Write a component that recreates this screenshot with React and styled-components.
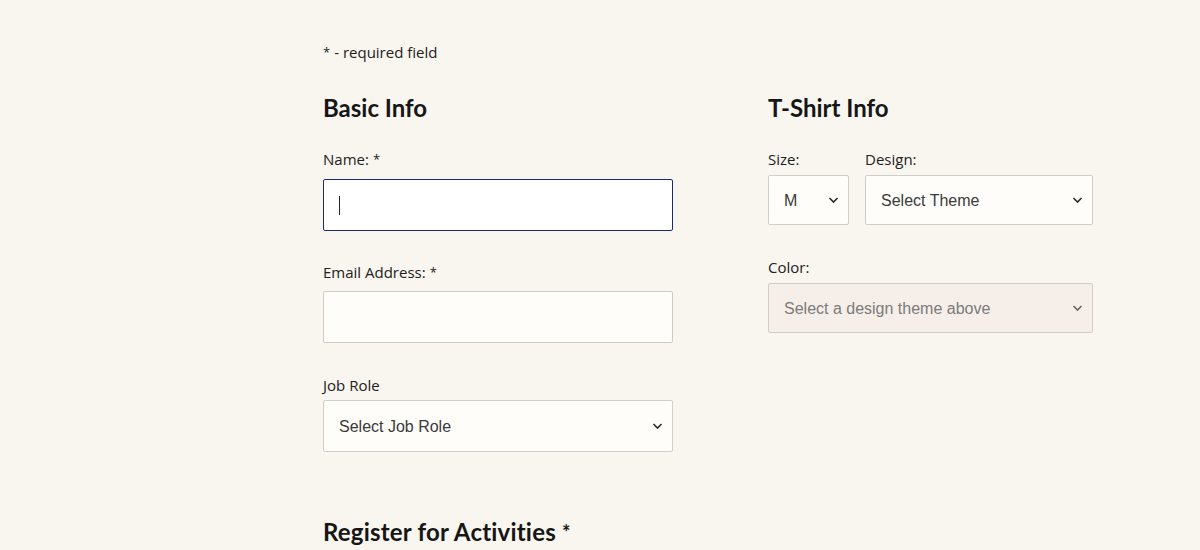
import React from "react";
import styled, { createGlobalStyle } from "styled-components";

const GlobalStyle = createGlobalStyle`
  html, body {
    margin: 0;
    padding: 0;
    background: #f9f5ef;
  }
  body {
    font-family: "Open Sans", "Noto Sans", sans-serif;
    color: #1d1d1d;
  }
`;

const Page = styled.form`
  width: 1200px;
  height: 550px;
  box-sizing: border-box;
  padding: 42px 0 0 323px;
  overflow: hidden;
`;

const Note = styled.p`
  margin: 0;
  font-size: 15px;
  line-height: 20px;
  color: #222;
`;

const Columns = styled.div`
  display: grid;
  grid-template-columns: 350px 325px;
  column-gap: 95px;
  align-items: start;
  margin-top: 31px;
`;

const Fieldset = styled.fieldset`
  border: none;
  margin: 0;
  padding: 0;
  min-width: 0;
`;

const Heading = styled.h2`
  margin: 0 0 26px;
  font-family: Lato, "Open Sans", sans-serif;
  font-size: 24px;
  line-height: 30px;
  font-weight: 700;
  letter-spacing: 0;
  color: #161616;
`;

const Field = styled.div`
  display: flex;
  flex-direction: column;
  gap: ${p => p.$gap || 10}px;
  margin-bottom: ${p => p.$after || 0}px;
`;

const Label = styled.label`
  font-size: 15px;
  line-height: 20px;
  color: #222;
`;

const Star = styled.span`
  font-size: 13px;
  vertical-align: 1px;
  margin-left: 4px;
`;

const TextInput = styled.input`
  box-sizing: border-box;
  width: 100%;
  height: 52px;
  padding: 0 16px;
  border: 1px solid ${p => (p.$focused ? "#1b2a7a" : "#cfcac4")};
  border-radius: 2px;
  background: ${p => (p.$focused ? "#ffffff" : "#fffdf9")};
  font-family: "Liberation Sans", Arial, sans-serif;
  font-size: 16px;
  outline: none;
  caret-color: #222;
`;

const SelectBox = styled.div`
  position: relative;
  width: ${p => p.$width || "100%"};
`;

const Select = styled.select`
  box-sizing: border-box;
  width: 100%;
  height: ${p => p.$height || 50}px;
  padding: 0 30px 0 15px;
  appearance: none;
  border: 1px solid #d2cdc7;
  border-radius: 2px;
  background: ${p => (p.disabled ? "#f6efe9" : "#fffdf9")};
  color: ${p => (p.disabled ? "#7b7b7b" : "#3a3a3a")};
  font-family: "Liberation Sans", Arial, sans-serif;
  font-size: 16px;
  opacity: 1;
`;

const Chevron = styled.svg`
  position: absolute;
  right: 10px;
  top: 50%;
  margin-top: -4px;
  width: 11px;
  height: 8px;
  pointer-events: none;
`;

const ShirtRow = styled.div`
  display: flex;
  gap: 16px;
  margin-bottom: 32px;
`;

const Caret = styled.span`
  position: absolute;
  left: 16px;
  top: 17px;
  width: 1px;
  height: 19px;
  background: #222;
`;

const InputWrap = styled.div`
  position: relative;
`;

const BottomHeading = styled(Heading)`
  margin-top: 65px;
  letter-spacing: 0.2px;
`;

function Dropdown({ width, height, disabled, children }) {
  return (
    <SelectBox $width={width}>
      <Select $height={height} disabled={disabled}>
        {children}
      </Select>
      <Chevron viewBox="0 0 11 8">
        <path d="M1.5 2 L5.5 6 L9.5 2" fill="none" stroke={disabled ? "#666" : "#2b2b2b"} strokeWidth="1.6" />
      </Chevron>
    </SelectBox>
  );
}

export default function App() {
  return (
    <>
      <GlobalStyle />
      <Page onSubmit={e => e.preventDefault()}>
        <Note>
          <Star style={{ marginLeft: 0, marginRight: 4 }}>*</Star>- required field
        </Note>
        <Columns>
          <Fieldset>
            <Heading>Basic Info</Heading>
            <Field $after={31}>
              <Label htmlFor="name">
                Name:<Star>*</Star>
              </Label>
              <InputWrap>
                <TextInput id="name" type="text" $focused />
                <Caret />
              </InputWrap>
            </Field>
            <Field $after={32} $gap={9}>
              <Label htmlFor="email">
                Email Address:<Star>*</Star>
              </Label>
              <TextInput id="email" type="email" />
            </Field>
            <Field $gap={5}>
              <Label htmlFor="title">Job Role</Label>
              <Dropdown height={52}>
                <option>Select Job Role</option>
              </Dropdown>
            </Field>
          </Fieldset>
          <Fieldset>
            <Heading>T-Shirt Info</Heading>
            <ShirtRow>
              <Field $gap={6}>
                <Label htmlFor="size">Size:</Label>
                <Dropdown width="81px">
                  <option>M</option>
                </Dropdown>
              </Field>
              <Field $gap={6} style={{ flex: 1 }}>
                <Label htmlFor="design">Design:</Label>
                <Dropdown>
                  <option>Select Theme</option>
                </Dropdown>
              </Field>
            </ShirtRow>
            <Field $gap={6}>
              <Label htmlFor="color">Color:</Label>
              <Dropdown disabled>
                <option>Select a design theme above</option>
              </Dropdown>
            </Field>
          </Fieldset>
        </Columns>
        <BottomHeading>
          Register for Activities<Star style={{ fontSize: 20, marginLeft: 6 }}>*</Star>
        </BottomHeading>
      </Page>
    </>
  );
}
